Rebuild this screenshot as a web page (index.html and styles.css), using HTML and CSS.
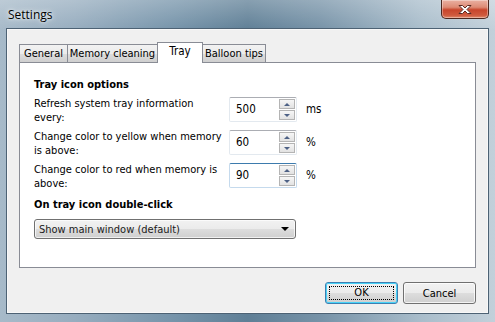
FILE: index.html
```html
<!DOCTYPE html>
<html lang="en">
<head>
  <meta charset="UTF-8" />
  <title>Settings</title>
  <link rel="stylesheet" href="styles.css">
</head>
<body>
  <div class="window">
    <div class="titlebar">
      <span class="title">Settings</span>
      <button class="close" aria-label="Close">
        <svg width="16" height="11" viewBox="0 0 16 11">
          <path d="M2 1.5 L5.5 1.5 L8 4 L10.5 1.5 L14 1.5 L10 5.5 L14 9.5 L10.5 9.5 L8 7 L5.5 9.5 L2 9.5 L6 5.5 Z" fill="#fff" stroke="#5a2a22" stroke-width="1" stroke-linejoin="round"/>
        </svg>
      </button>
    </div>

    <div class="client">
      <div class="tabs">
        <div class="tab">General</div>
        <div class="tab">Memory cleaning</div>
        <div class="tab active">Tray</div>
        <div class="tab">Balloon tips</div>
      </div>

      <div class="panel">
        <div class="heading">Tray icon options</div>

        <div class="row">
          <label class="label">Refresh system tray information<br>every:</label>
          <div class="spin">
            <span class="value">500</span>
            <span class="arrows"><span class="up"></span><span class="down"></span></span>
          </div>
          <span class="unit">ms</span>
        </div>

        <div class="row">
          <label class="label">Change color to yellow when memory<br>is above:</label>
          <div class="spin">
            <span class="value">60</span>
            <span class="arrows"><span class="up"></span><span class="down"></span></span>
          </div>
          <span class="unit">%</span>
        </div>

        <div class="row">
          <label class="label">Change color to red when memory is<br>above:</label>
          <div class="spin hover">
            <span class="value">90</span>
            <span class="arrows"><span class="up"></span><span class="down"></span></span>
          </div>
          <span class="unit">%</span>
        </div>

        <div class="heading second">On tray icon double-click</div>
        <div class="combo">
          <span>Show main window (default)</span>
          <span class="caret"></span>
        </div>
      </div>

      <div class="buttons">
        <button class="btn default"><span class="focus">OK</span></button>
        <button class="btn">Cancel</button>
      </div>
    </div>
  </div>
</body>
</html>
```

FILE: styles.css
```css
* {
  box-sizing: border-box;
}
body {
  margin: 0;
  width: 495px;
  height: 322px;
  overflow: hidden;
  font-family: "DejaVu Sans Condensed", "DejaVu Sans", sans-serif;
  font-stretch: condensed;
  font-size: 11px;
  color: #000;
}
.window {
  height: 322px;
  background:
    linear-gradient(180deg, rgba(255,255,255,0.25) 0%, rgba(255,255,255,0) 30px),
    linear-gradient(90deg, #a7bac9 0%, #97adbf 15%, #7694aa 35%, #5f7f96 50%, #7793a8 65%, #a9bdcb 85%, #c2d0da 100%);
}
.titlebar {
  height: 28px;
  display: flex;
  justify-content: space-between;
  align-items: flex-start;
}
.title {
  font-family: "Open Sans", "Noto Sans", sans-serif;
  font-stretch: normal;
  font-size: 12px;
  margin: 6px 0 0 8px;
  text-shadow: 0 0 6px rgba(255,255,255,0.9), 0 0 3px rgba(255,255,255,0.8);
}
.close {
  width: 48px;
  height: 19px;
  margin-right: 6px;
  padding: 0;
  border: 1px solid #4c2820;
  border-top: none;
  border-radius: 0 0 5px 5px;
  background: linear-gradient(180deg, #eab1a3 0%, #dd8b75 40%, #c8452c 55%, #cf5a3e 85%, #e08a6c 100%);
  box-shadow: inset 0 0 0 1px rgba(255,255,255,0.35);
  display: flex;
  align-items: center;
  justify-content: center;
}
.client {
  margin: 0 6px;
  height: 286px;
  border: 1px solid #4d6274;
  background: #f0f0f0;
  box-shadow: inset 0 0 0 1px #f8f8f8;
  padding: 13px 12px 0 12px;
}
.tabs {
  display: flex;
  align-items: flex-end;
  height: 20px;
  position: relative;
  z-index: 1;
}
.tab {
  flex-shrink: 0;
  height: 18px;
  line-height: 17px;
  text-align: center;
  white-space: nowrap;
  border: 1px solid #898c95;
  border-bottom: none;
  margin-right: -1px;
  background: linear-gradient(180deg, #f2f2f2 0%, #ebebeb 50%, #dddddd 51%, #cfcfcf 100%);
}
.tab:nth-child(1) { width: 49px; }
.tab:nth-child(2) { width: 91px; }
.tab:nth-child(4) { width: 64px; }
.tab.active {
  width: 46px;
  height: 21px;
  margin-bottom: -1px;
  line-height: 16px;
  background: #fff;
  font-size: 11.5px;
}
.panel {
  height: 206px;
  border: 1px solid #898c95;
  background: #fff;
  padding: 15px 14px 0 14px;
}
.heading {
  font-weight: bold;
  line-height: 14px;
  margin-bottom: 5px;
}
.heading.second {
  margin-top: 10px;
  margin-bottom: 7px;
}
.row {
  display: flex;
  align-items: flex-start;
  height: 25px;
  margin-bottom: 8px;
}
.label {
  width: 195px;
  white-space: nowrap;
  line-height: 14px;
}
.spin {
  width: 68px;
  height: 25px;
  border: 1px solid #e3e9ef;
  border-top-color: #abadb3;
  border-radius: 2px;
  display: flex;
  align-items: center;
  justify-content: space-between;
  padding: 0 1px 0 6px;
  background: #fff;
}
.spin.hover {
  border-color: #c5daed;
  border-top-color: #3d7bad;
}
.value {
  font-size: 11.5px;
  padding-bottom: 2px;
}
.arrows {
  display: flex;
  flex-direction: column;
  gap: 1px;
}
.up, .down {
  width: 16px;
  height: 10px;
  border: 1px solid #b4b4b4;
  background: linear-gradient(180deg, #f6f6f6, #e2e2e2);
  position: relative;
}
.up::after, .down::after {
  content: "";
  position: absolute;
  left: 4px;
  border-left: 3px solid transparent;
  border-right: 3px solid transparent;
}
.up::after {
  top: 3px;
  border-bottom: 3px solid #4d6185;
}
.down::after {
  top: 3px;
  border-top: 3px solid #4d6185;
}
.unit {
  margin-left: 9px;
  line-height: 25px;
  font-size: 11.5px;
}
.combo {
  width: 262px;
  height: 20px;
  border: 1px solid #707070;
  border-radius: 3px;
  background: linear-gradient(180deg, #f2f2f2 0%, #ebebeb 50%, #dddddd 51%, #cfcfcf 100%);
  box-shadow: inset 0 0 0 1px rgba(255,255,255,0.7);
  display: flex;
  align-items: center;
  justify-content: space-between;
  padding: 0 6px 0 4px;
  color: #1a1a1a;
}
.caret {
  border-left: 4px solid transparent;
  border-right: 4px solid transparent;
  border-top: 4px solid #000;
}
.buttons {
  display: flex;
  justify-content: flex-end;
  gap: 5px;
  margin-top: 14px;
}
.btn {
  width: 73px;
  height: 22px;
  padding: 0;
  font: inherit;
  color: #000;
  border: 1px solid #707070;
  border-radius: 3px;
  background: linear-gradient(180deg, #f2f2f2 0%, #ebebeb 50%, #dddddd 51%, #cfcfcf 100%);
  box-shadow: inset 0 0 0 1px rgba(255,255,255,0.75);
}
.btn.default {
  border-color: #3c7fb1;
  box-shadow: inset 0 0 0 1px #48d3f8;
  padding: 3px;
}
.focus {
  display: block;
  height: 14px;
  line-height: 12px;
  border: 1px dotted #000;
}
```
